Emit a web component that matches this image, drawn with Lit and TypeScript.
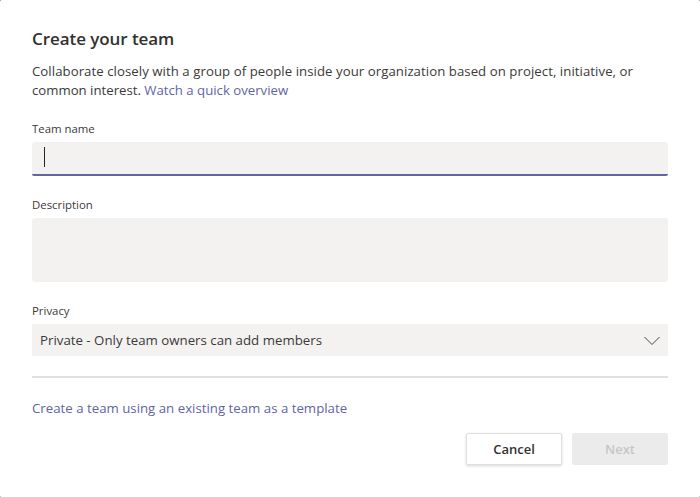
import { LitElement, html, css } from "lit";
import { customElement } from "lit/decorators.js";

@customElement("app-root")
export class AppRoot extends LitElement {
  static styles = css`
    :host { display: block; width: 700px; height: 497px; background: #6b6b6b; overflow: hidden; }
    .dialog { box-sizing: border-box; width: 700px; height: 497px; padding: 27px 32px 0; display: flex; flex-direction: column; background: #fff; border-radius: 1.5px;
      font-family: "Open Sans", "Noto Sans", sans-serif; color: #252423; font-size: 14px; }
    h1 { margin: 0; font-size: 17px; letter-spacing: -0.07px; line-height: 24px; font-weight: 600; color: #323130; }
    .intro { margin: 11px 0 0; font-size: 13.2px; line-height: 19px; color: #3b3a39; }
    .intro::first-line { letter-spacing: 0.06px; }
    a { color: #6264a7; text-decoration: none; }
    label { display: block; font-size: 11.4px; line-height: 16px; color: #3b3a39; margin-top: 21px; }
    .field { margin-top: 5px; background: #f3f2f1; border-radius: 3px; box-sizing: border-box; }
    .name { height: 34px; border-bottom: 2px solid #6264a7; border-radius: 3px 3px 2px 2px; padding: 5px 0 0 12px; }
    .caret { width: 1px; height: 20px; background: #252423; }
    .desc { height: 64px; }
    .select { height: 32px; border-radius: 0; padding: 0 8px; display: flex; align-items: center; justify-content: space-between; font-size: 13.27px; color: #3b3a39; }
    .select svg { display: block; }
    .rule { height: 2px; background: #e1dfdd; margin-top: 20px; }
    .tpl { margin-top: 20px; font-size: 13.25px; line-height: 20px; }
    .actions { display: flex; justify-content: flex-end; gap: 10px; margin-top: 15px; }
    button { width: 96px; height: 32px; box-sizing: border-box; border-radius: 2px; font: 600 13px "Open Sans", "Noto Sans", sans-serif; padding: 0; }
    .cancel { background: #fff; color: #323130; border: 1px solid #e1dfdd; box-shadow: 0 1px 3px rgba(0,0,0,.16); }
    .next { background: #ebebeb; color: #c8c6c4; border: none; }
  `;
  render() {
    return html`<div class="dialog">
      <h1>Create your team</h1>
      <p class="intro">Collaborate closely with a group of people inside your organization based on project, initiative, or common interest. <a href="#">Watch a quick overview</a></p>
      <label>Team name</label>
      <div class="field name"><div class="caret"></div></div>
      <label>Description</label>
      <div class="field desc"></div>
      <label>Privacy</label>
      <div class="field select"><span>Private - Only team owners can add members</span>
        <svg width="16" height="10" viewBox="0 0 16 10"><path d="M.5 2 8 9.5 15.500 2" fill="none" stroke="#484644" stroke-width="1"/></svg></div>
      <div class="rule"></div>
      <a class="tpl" href="#">Create a team using an existing team as a template</a>
      <div class="actions"><button class="cancel">Cancel</button><button class="next" disabled>Next</button></div>
    </div>`;
  }
}
